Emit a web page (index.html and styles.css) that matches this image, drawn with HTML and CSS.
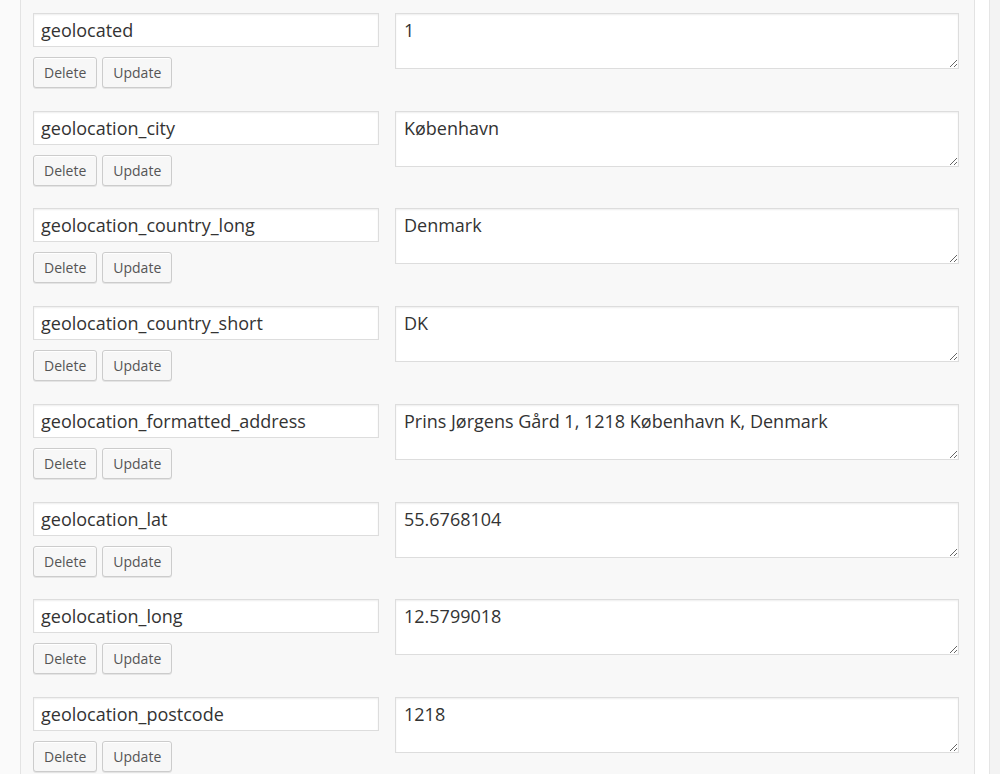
FILE: index.html
```html
<!DOCTYPE html>
<html lang="en">
<head>
    <meta charset="UTF-8">
    <title>Custom Fields</title>
    <link rel="stylesheet" href="styles.css">
</head>
<body>
    <div class="page">
        <div class="panel">
            <div class="meta-row">
                <div class="meta-key">
                    <input type="text" class="key-input" value="geolocated">
                    <div class="actions">
                        <button class="btn">Delete</button>
                        <button class="btn">Update</button>
                    </div>
                </div>
                <textarea class="meta-value">1</textarea>
            </div>
            <div class="meta-row">
                <div class="meta-key">
                    <input type="text" class="key-input" value="geolocation_city">
                    <div class="actions">
                        <button class="btn">Delete</button>
                        <button class="btn">Update</button>
                    </div>
                </div>
                <textarea class="meta-value">København</textarea>
            </div>
            <div class="meta-row">
                <div class="meta-key">
                    <input type="text" class="key-input" value="geolocation_country_long">
                    <div class="actions">
                        <button class="btn">Delete</button>
                        <button class="btn">Update</button>
                    </div>
                </div>
                <textarea class="meta-value">Denmark</textarea>
            </div>
            <div class="meta-row">
                <div class="meta-key">
                    <input type="text" class="key-input" value="geolocation_country_short">
                    <div class="actions">
                        <button class="btn">Delete</button>
                        <button class="btn">Update</button>
                    </div>
                </div>
                <textarea class="meta-value">DK</textarea>
            </div>
            <div class="meta-row">
                <div class="meta-key">
                    <input type="text" class="key-input" value="geolocation_formatted_address">
                    <div class="actions">
                        <button class="btn">Delete</button>
                        <button class="btn">Update</button>
                    </div>
                </div>
                <textarea class="meta-value">Prins Jørgens Gård 1, 1218 København K, Denmark</textarea>
            </div>
            <div class="meta-row">
                <div class="meta-key">
                    <input type="text" class="key-input" value="geolocation_lat">
                    <div class="actions">
                        <button class="btn">Delete</button>
                        <button class="btn">Update</button>
                    </div>
                </div>
                <textarea class="meta-value">55.6768104</textarea>
            </div>
            <div class="meta-row">
                <div class="meta-key">
                    <input type="text" class="key-input" value="geolocation_long">
                    <div class="actions">
                        <button class="btn">Delete</button>
                        <button class="btn">Update</button>
                    </div>
                </div>
                <textarea class="meta-value">12.5799018</textarea>
            </div>
            <div class="meta-row">
                <div class="meta-key">
                    <input type="text" class="key-input" value="geolocation_postcode">
                    <div class="actions">
                        <button class="btn">Delete</button>
                        <button class="btn">Update</button>
                    </div>
                </div>
                <textarea class="meta-value">1218</textarea>
            </div>
        </div>
        <div class="side-edge"></div>
    </div>
</body>
</html>
```

FILE: styles.css
```css
html, body {
    margin: 0;
    padding: 0;
    height: 100%;
    overflow: hidden;
}
body {
    font-family: "Open Sans", "Liberation Sans", sans-serif;
    background: #fff;
    color: #333;
}
.page {
    display: flex;
    height: 774px;
    padding-left: 20px;
    background: linear-gradient(to right, #fafafa 0, #fafafa 20px, #fff 20px);
}
.panel {
    width: 955px;
    background: #f8f8f8;
    border-left: 1px solid #e3e3e3;
    border-right: 1px solid #e3e3e3;
    padding: 13px 15px 0 12px;
    box-sizing: border-box;
}
.side-edge {
    margin-left: auto;
    width: 10px;
    background: #f3f3f3;
    border-left: 1px solid #e5e5e5;
}
.meta-row {
    display: flex;
    height: 97.71px;
}
.meta-key {
    width: 346px;
    margin-right: 16px;
}
.key-input {
    display: block;
    width: 100%;
    height: 34px;
    box-sizing: border-box;
    padding: 0 7px;
    border: 1px solid #ddd;
    background: #fff;
    box-shadow: inset 0 1px 2px rgba(0,0,0,0.07);
    font-family: inherit;
    font-size: 18px;
    color: #333;
    outline: none;
}
.actions {
    display: flex;
    gap: 5px;
    margin-top: 10px;
}
.btn {
    height: 31px;
    padding: 0 10px;
    border: 1px solid #ccc;
    border-radius: 3px;
    background: #f7f7f7;
    box-shadow: inset 0 1px 0 #fff, 0 1px 0 rgba(0,0,0,0.08);
    font-family: inherit;
    font-size: 14px;
    color: #555;
    cursor: pointer;
}
.meta-value {
    display: block;
    width: 564px;
    height: 56px;
    box-sizing: border-box;
    padding: 5px 8px;
    border: 1px solid #ddd;
    background: #fff;
    box-shadow: inset 0 1px 2px rgba(0,0,0,0.07);
    font-family: inherit;
    font-size: 18px;
    line-height: 1.3;
    color: #333;
    resize: vertical;
    outline: none;
}
```
